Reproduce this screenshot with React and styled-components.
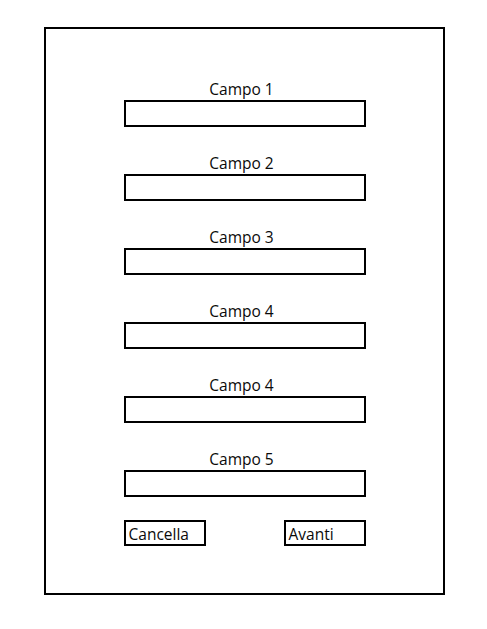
import React from 'react'
import styled, { createGlobalStyle } from 'styled-components'

const GlobalStyle = createGlobalStyle`
    html, body {
        margin:0;
        padding:0;
        background:#ffffff;
    }
    body {
        font-family:"Open Sans", "Noto Sans", "Liberation Sans", sans-serif;
        color:#0a0a0a;
    }
`;

const fields = ['Campo 1', 'Campo 2', 'Campo 3', 'Campo 4', 'Campo 4', 'Campo 5']

const App = () => (
    <>
        <GlobalStyle/>
        <Frame>
            {fields.map((name, i) =>
                <FieldGroup key={i}>
                    <FieldLabel>{name}</FieldLabel>
                    <FieldBox/>
                </FieldGroup>
            )}
            <ButtonRow>
                <ActionButton>Cancella</ActionButton>
                <ActionButton>Avanti</ActionButton>
            </ButtonRow>
        </Frame>
    </>
)

export default App;

const Frame = styled.div`
    box-sizing:border-box;
    margin:27px 0 0 44px;
    width:401px;
    height:568px;
    border:2px solid #000;
    padding-top:49px;
    display:flex;
    flex-direction:column;
    align-items:center;
    gap:25px;
`;

const FieldGroup = styled.div`
    display:flex;
    flex-direction:column;
    align-items:center;
`;

const FieldLabel = styled.div`
    font-size:15.5px;
    line-height:22px;
    height:22px;
    margin-left:-6px;
`;

const FieldBox = styled.div`
    box-sizing:border-box;
    width:242px;
    height:27px;
    border:2px solid #000;
`;

const ButtonRow = styled.div`
    width:242px;
    margin-top:-2px;
    display:flex;
    justify-content:space-between;
`;

const ActionButton = styled.div`
    box-sizing:border-box;
    width:82px;
    height:26px;
    border:2px solid #000;
    padding:0 0 0 3px;
    font-size:15.5px;
    line-height:24px;
`;
